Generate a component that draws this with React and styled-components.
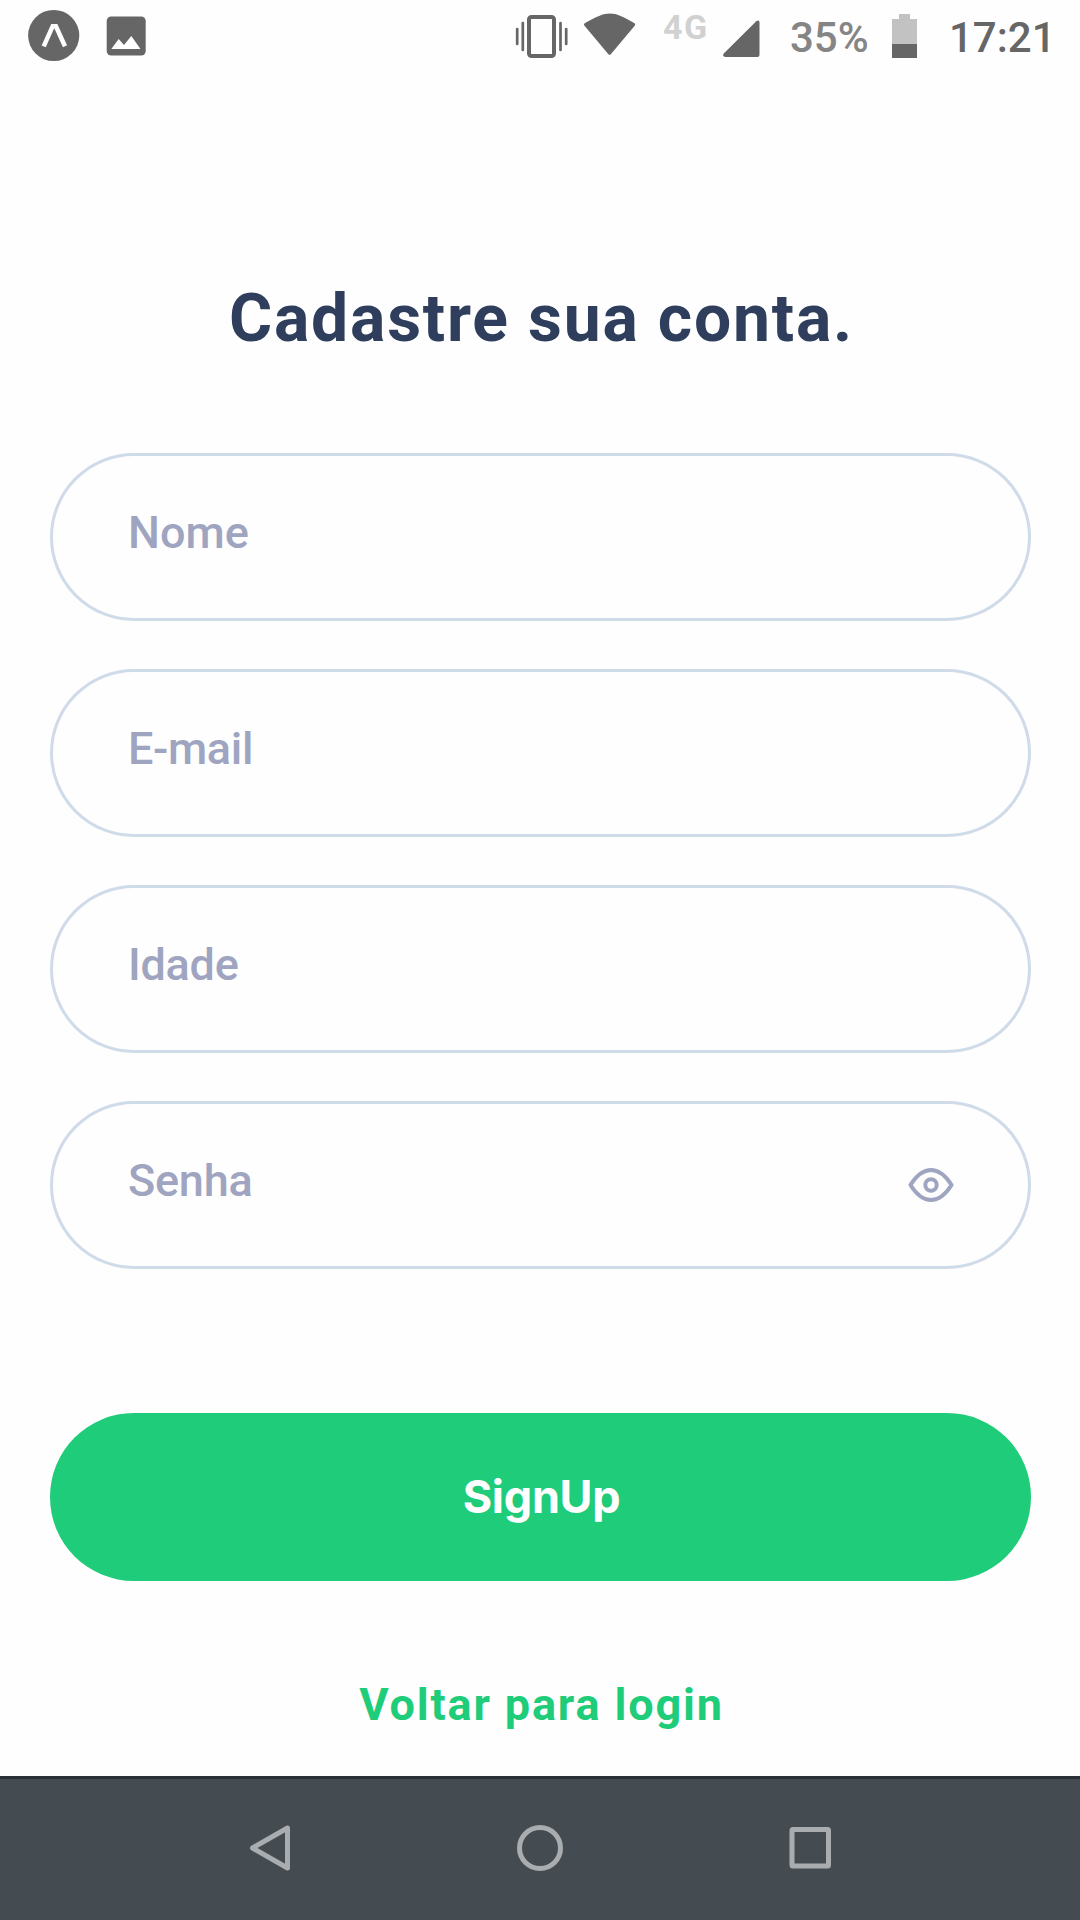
import React from "react";
import styled, { createGlobalStyle } from "styled-components";

const GlobalStyle = createGlobalStyle`
  * { box-sizing: border-box; }
  body { margin: 0; background: #fff; font-family: Roboto, "Liberation Sans", sans-serif; }
`;

const Screen = styled.div`
  width: 1080px;
  height: 1920px;
  display: flex;
  flex-direction: column;
  background: #fefefe;
  overflow: hidden;
`;

const StatusBar = styled.header`
  height: 72px;
  padding: 0 28px;
  display: flex;
  justify-content: space-between;
  align-items: flex-start;
`;

const StatusGroup = styled.div`
  display: flex;
  align-items: flex-start;
`;

const StatusIcon = styled.svg`
  display: block;
  flex: none;
  margin-left: ${(p) => p.$gap || 0}px;
`;

const StatusText = styled.span`
  font-size: ${(p) => p.$size || 42}px;
  font-weight: ${(p) => p.$weight || 500};
  line-height: 50px;
  padding-top: ${(p) => p.$top}px;
  width: ${(p) => p.$width}px;
  margin-left: ${(p) => p.$gap}px;
  letter-spacing: ${(p) => p.$tracking || 0}px;
  color: ${(p) => p.$color};
  white-space: nowrap;
`;

const Main = styled.main`
  flex: 1;
  display: flex;
  flex-direction: column;
  align-items: center;
  padding: 207px 49px 0 50px;
`;

const Title = styled.h1`
  margin: 0;
  padding-left: 2px;
  font-size: 66px;
  line-height: 80px;
  font-weight: 700;
  letter-spacing: 1.8px;
  color: #2e3e5c;
  white-space: nowrap;
`;

const Form = styled.form`
  width: 100%;
  margin-top: 94px;
  display: flex;
  flex-direction: column;
  gap: 48px;
`;

const Field = styled.label`
  height: 168px;
  display: flex;
  align-items: center;
  justify-content: space-between;
  padding: 0 74px 0 75px;
  border: 3px solid #d0dbea;
  border-radius: 84px;
`;

const Placeholder = styled.span`
  font-size: 45px;
  line-height: 54px;
  font-weight: 500;
  letter-spacing: ${(p) => p.$tracking}px;
  color: #9fa5c0;
  padding-bottom: 9px;
`;

const SubmitButton = styled.button`
  height: 168px;
  margin-top: 96px;
  padding: 0 0 2px 2px;
  border: 0;
  border-radius: 84px;
  background: #1fcc79;
  color: #fff;
  font-family: Inter, Roboto, sans-serif;
  font-size: 45px;
  font-weight: 700;
  letter-spacing: -0.3px;
`;

const LoginLink = styled.a`
  margin-top: 97px;
  padding-left: 2px;
  font-size: 45px;
  line-height: 54px;
  font-weight: 700;
  letter-spacing: 1.85px;
  color: #1fcc79;
  white-space: nowrap;
`;

const NavBar = styled.nav`
  height: 144px;
  border-top: 3px solid #2b3136;
  background: #454c51;
  padding: 0 135px 3px;
  display: grid;
  grid-template-columns: repeat(3, 1fr);
  justify-items: center;
  align-items: center;
`;

const NavIcon = styled.svg`
  display: block;
  fill: none;
  stroke: #aaadaf;
  stroke-width: 5;
  stroke-linejoin: round;
`;

const GREY = "#666666";

const FIELDS = [
  { label: "Nome", tracking: 0 },
  { label: "E-mail", tracking: -0.35 },
  { label: "Idade", tracking: -0.25 },
  { label: "Senha", tracking: -0.25, secret: true },
];

function EyeIcon() {
  return (
    <svg width="46" height="36" viewBox="0 0 46 36" fill="none" stroke="#9fa5c0" strokeWidth="4" strokeLinejoin="round">
      <path d="M2.4 18 C8.5 8.5 15.5 3 23 3 S37.500 8.500 43.600 18 C37.500 27.500 30.500 33 23 33 S8.500 27.500 2.400 18 Z" />
      <circle cx="23" cy="18" r="5.700" />
    </svg>
  );
}

export default function App() {
  return (
    <Screen>
      <GlobalStyle />
      <StatusBar>
        <StatusGroup>
          <StatusIcon width="52" height="72" viewBox="28 0 52 72">
            <circle cx="53.700" cy="35.500" r="25.600" fill={GREY} />
            <path d="M43.700 46.300 L52.700 26.200 H55.900 L65 46.300" fill="none" stroke="#fff" strokeWidth="4.500" />
          </StatusIcon>
          <StatusIcon $gap={26} width="40" height="72" viewBox="106 0 40 72">
            <rect x="106.700" y="16.500" width="39" height="39" rx="4.500" fill={GREY} />
            <path d="M111.300 49 L118.700 39 L124 45 L131.300 36 L140.500 49 Z" fill="#fff" />
          </StatusIcon>
        </StatusGroup>
        <StatusGroup>
          <StatusIcon width="54" height="72" viewBox="515 0 54 72">
            <rect x="529" y="17" width="25" height="39" rx="2.500" fill="none" stroke={GREY} strokeWidth="4" />
            <path d="M517.200 29 V44 M522.800 23 V50 M560.500 23 V50 M566.200 29 V44" stroke={GREY} strokeWidth="2.700" strokeLinecap="round" />
          </StatusIcon>
          <StatusIcon $gap={14} width="54" height="72" viewBox="583 0 54 72">
            <path d="M584.600 23.200 C608 10.300 612 10.300 634.600 23.200 Q635.800 24.300 634.700 25.700 L611 54 Q609.600 55.700 608.200 54 L584.500 25.700 Q583.300 24.300 584.600 23.200 Z" fill={GREY} />
          </StatusIcon>
          <StatusText $gap={26} $width={60} $size={34} $weight={700} $top={2} $tracking={1.6} $color="#d1d1d1">4G</StatusText>
          <StatusIcon width="38" height="72" viewBox="723 0 38 72">
            <path d="M724 53.200 L756.300 21.200 Q759.300 19.500 759.500 22.500 V55 Q759.500 57 757.500 57 H725 Q722 56 724 53.200 Z" fill={GREY} />
          </StatusIcon>
          <StatusText $gap={29} $width={78} $top={13} $color="#858585">35%</StatusText>
          <StatusIcon $gap={24} width="25" height="72" viewBox="892 0 25 72">
            <path d="M892 19 H899 V14 H910 V19 H917 V44 H892 Z" fill="#c2c2c2" />
            <rect x="892" y="44" width="25" height="14" fill={GREY} />
          </StatusIcon>
          <StatusText $gap={32} $width={103} $top={13} $color={GREY}>17:21</StatusText>
        </StatusGroup>
      </StatusBar>
      <Main>
        <Title>Cadastre sua conta.</Title>
        <Form>
          {FIELDS.map((field) => (
            <Field key={field.label}>
              <Placeholder $tracking={field.tracking}>{field.label}</Placeholder>
              {field.secret && <EyeIcon />}
            </Field>
          ))}
          <SubmitButton type="button">SignUp</SubmitButton>
        </Form>
        <LoginLink>Voltar para login</LoginLink>
      </Main>
      <NavBar>
        <NavIcon width="48" height="52" viewBox="0 0 48 52">
          <path d="M41.500 6 V46 L6.500 26 Z" />
        </NavIcon>
        <NavIcon width="52" height="52" viewBox="0 0 52 52">
          <circle cx="26" cy="26" r="20.500" />
        </NavIcon>
        <NavIcon width="48" height="52" viewBox="0 0 48 52">
          <rect x="6" y="7.500" width="36.500" height="36.500" rx="1" />
        </NavIcon>
      </NavBar>
    </Screen>
  );
}
